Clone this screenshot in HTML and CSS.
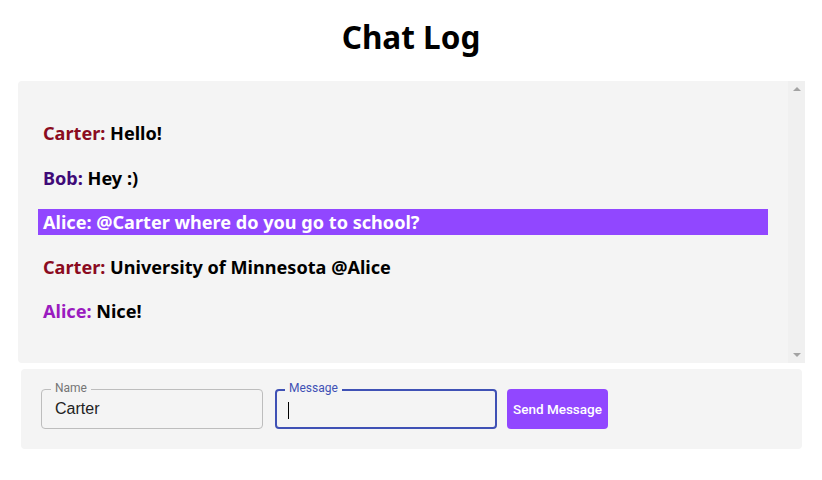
FILE: index.html
```html
<!DOCTYPE html>
<html>
<head>
<meta charset="utf-8">
<link rel="stylesheet" href="styles.css">
</head>
<body>
<h1 class="title">Chat Log</h1>
<div class="chat">
  <div class="messages">
    <p class="msg"><span class="name carter">Carter:</span> Hello!</p>
    <p class="msg"><span class="name bob">Bob:</span> Hey :)</p>
    <p class="msg mention"><span class="name">Alice:</span> @Carter where do you go to school?</p>
    <p class="msg"><span class="name carter">Carter:</span> University of Minnesota @Alice</p>
    <p class="msg"><span class="name alice">Alice:</span> Nice!</p>
  </div>
  <div class="scrollbar">
    <span class="arrow up"></span>
    <span class="arrow down"></span>
  </div>
</div>
<form class="composer">
  <div class="field">
    <span class="label">Name</span>
    <span class="value">Carter</span>
  </div>
  <div class="field focused">
    <span class="label">Message</span>
    <span class="caret"></span>
  </div>
  <button type="button" class="send">Send Message</button>
</form>
</body>
</html>
```
FILE: styles.css
```css
* { box-sizing: border-box; }
body {
  margin: 0;
  background: #fff;
  font-family: "Noto Sans", "Lato", sans-serif;
  color: #000;
}
.title {
  margin: 0;
  padding-top: 17px;
  height: 81px;
  text-align: center;
  font-size: 31.5px;
  font-weight: 700;
  line-height: 40px;
}
.chat {
  margin-left: 18px;
  width: 787px;
  height: 282px;
  background: #f4f4f4;
  border-radius: 4px;
  display: flex;
}
.messages {
  flex: 1;
  padding: 39px 20px;
  display: flex;
  flex-direction: column;
  gap: 18.5px;
}
.msg {
  margin: 0;
  height: 26px;
  line-height: 26px;
  padding: 0 5px;
  font-size: 18.1px;
  font-weight: 700;
}
.name.carter { color: #8b0b1f; }
.name.bob { color: #3f0a78; }
.name.alice { color: #9a1bbf; }
.mention { background: #9147ff; color: #fff; }
.scrollbar {
  width: 17px;
  background: #f0f0f0;
  display: flex;
  flex-direction: column;
  justify-content: space-between;
  align-items: center;
  padding: 6px 0;
}
.arrow {
  width: 0; height: 0;
  border-left: 4px solid transparent;
  border-right: 4px solid transparent;
}
.arrow.up { border-bottom: 4px solid #a3a3a3; }
.arrow.down { border-top: 4px solid #a3a3a3; }
.composer {
  margin: 6px 0 0 21px;
  width: 781px;
  height: 80px;
  background: #f4f4f4;
  border-radius: 4px;
  padding: 20px;
  display: flex;
  align-items: flex-start;
}
.field {
  position: relative;
  width: 222px;
  height: 40px;
  border: 1px solid #bdbdbd;
  border-radius: 4px;
  margin-right: 12px;
  font-family: "Roboto", "Liberation Sans", sans-serif;
  display: flex;
  align-items: center;
  padding: 0 13px 0;
}
.field.focused {
  border: 2px solid #3f51b5;
  padding-left: 11px;
  margin-right: 10px;
}
.label {
  position: absolute;
  top: -9px;
  left: 9px;
  padding: 0 4px;
  background: #f4f4f4;
  font-size: 12px;
  line-height: 14px;
  color: #757575;
}
.focused .label { color: #3f51b5; left: 8px; top: -10px; }
.value { font-size: 16px; color: #222; font-family: "Liberation Sans", sans-serif; }
.caret { width: 1px; height: 17px; background: #000; margin-top: 2px; }
.send {
  width: 101px;
  height: 40px;
  border: none;
  border-radius: 4px;
  background: #9147ff;
  color: #fff;
  font-family: "Roboto", "Liberation Sans", sans-serif;
  font-weight: 500;
  font-size: 13.5px;
  padding: 0;
}
```
